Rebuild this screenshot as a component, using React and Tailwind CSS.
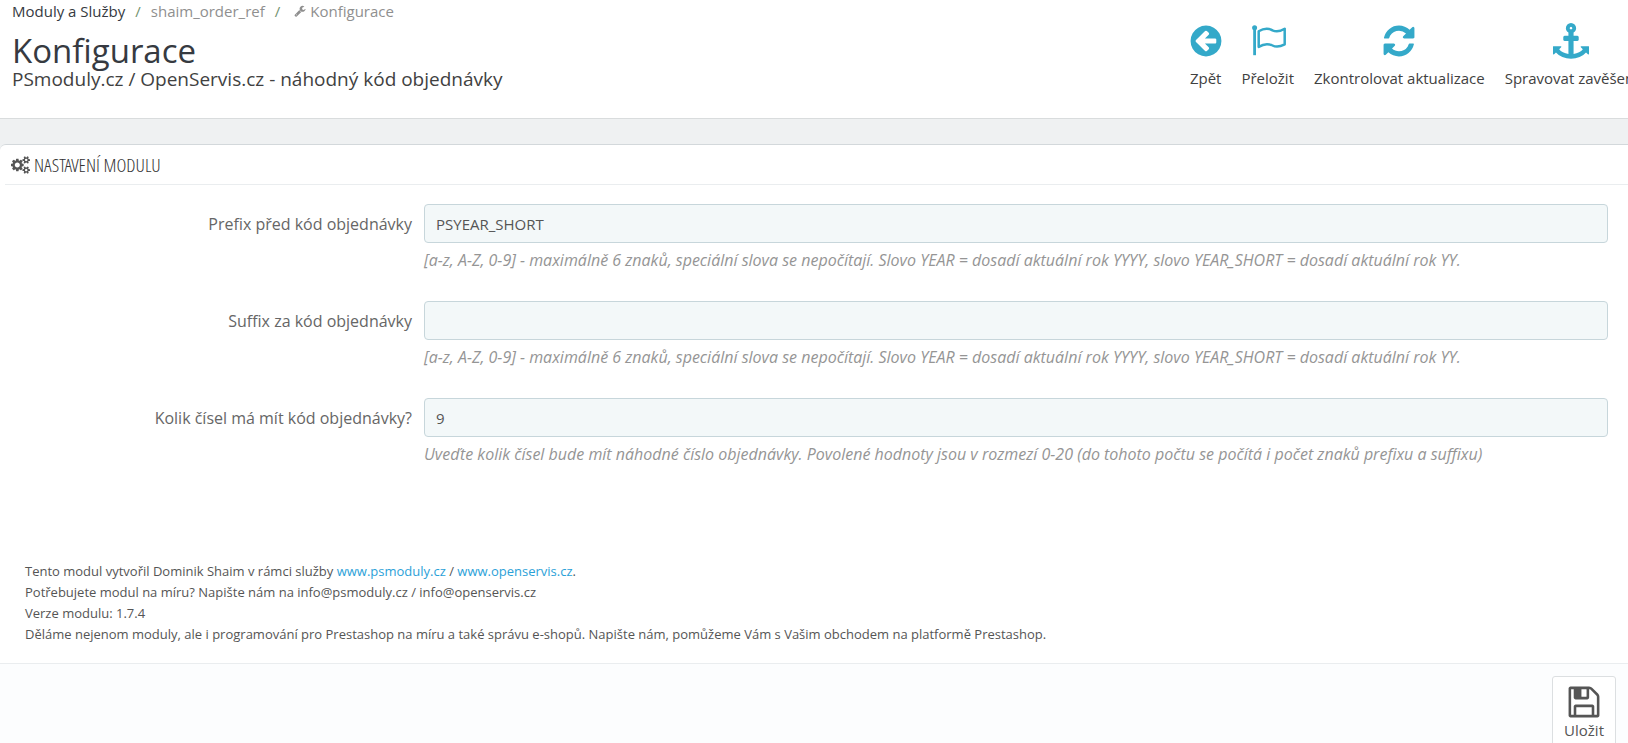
import React, { useState } from "react";

const paths = {
  back: "M1408 960v-128q0-26-19-45t-45-19h-502l189-189q19-19 19-45t-19-45l-91-91q-18-18-45-18t-45 18l-362 362-91 91q-18 18-18 45t18 45l91 91 362 362q18 18 45 18t45-18l91-91q18-18 18-45t-18-45l-189-189h502q26 0 45-19t19-45zm256-64q0 209-103 385.5t-279.5 279.5-385.5 103-385.5-103-279.5-279.5-103-385.5 103-385.5 279.5-279.5 385.5-103 385.5 103 279.5 279.5 103 385.5z",
  refresh: "M1639 1056q0 5-1 7-64 268-268 434.5t-478 166.5q-146 0-282.5-55t-243.5-157l-129 129q-19 19-45 19t-45-19-19-45v-448q0-26 19-45t45-19h448q26 0 45 19t19 45-19 45l-137 137q71 66 161 102t187 36q134 0 250-65t186-179q11-17 53-117 8-23 30-23h192q13 0 22.5 9.5t9.5 22.5zm25-800v448q0 26-19 45t-45 19h-448q-26 0-45-19t-19-45 19-45l138-138q-148-137-349-137-134 0-250 65t-186 179q-11 17-53 117-8 23-30 23h-199q-13 0-22.5-9.5t-9.5-22.5v-7q65-268 270-434.5t480-166.5q146 0 284 55.5t245 156.5l130-129q19-19 45-19t45 19 19 45z",
  anchor: "M960 256q0-26-19-45t-45-19-45 19-19 45 19 45 45 19 45-19 19-45zm832 928v352q0 22-20 30-8 2-12 2-12 0-23-9l-93-93q-119 143-318.5 226.5t-429.5 83.5-429.5-83.5-318.5-226.5l-93 93q-9 9-23 9-4 0-12-2-20-8-20-30v-352q0-14 9-23t23-9h352q22 0 30 20 8 19-7 35l-100 100q67 91 189.5 153.5t271.5 82.5v-647h-192q-26 0-45-19t-19-45v-128q0-26 19-45t45-19h192v-163q-58-34-93-92.5t-35-128.5q0-106 75-181t181-75 181 75 75 181q0 70-35 128.5t-93 92.5v163h192q26 0 45 19t19 45v128q0 26-19 45t-45 19h-192v647q149-20 271.5-82.5t189.5-153.5l-100-100q-15-16-7-35 8-20 30-20h352q14 0 23 9t9 23z",
  save: "M512 1536h768v-384h-768v384zm896 0h128v-896q0-14-10-38.5t-20-34.5l-281-281q-10-10-34-20t-39-10v416q0 40-28 68t-68 28h-576q-40 0-68-28t-28-68v-416h-128v1280h128v-416q0-40 28-68t68-28h832q40 0 68 28t28 68v416zm-384-928v-320q0-13-9.5-22.5t-22.5-9.5h-192q-13 0-22.5 9.5t-9.5 22.5v320q0 13 9.5 22.5t22.5 9.5h192q13 0 22.5-9.5t9.5-22.5zm640 32v928q0 40-28 68t-68 28h-1344q-40 0-68-28t-28-68v-1344q0-40 28-68t68-28h928q40 0 88 20t76 48l280 280q28 28 48 76t20 88z",
  wrench: "M448 1472q0-26-19-45t-45-19-45 19-19 45 19 45 45 19 45-19 19-45zm644-420l-682 682q-37 37-90 37-52 0-91-37l-106-108q-38-36-38-90 0-53 38-91l681-681q39 98 114.5 173.5t173.5 114.5zm634-435q0 39-23 106-47 134-164.5 217.5t-258.5 83.5q-185 0-316.5-131.5t-131.5-316.5 131.5-316.5 316.5-131.5q58 0 121.5 16.5t107.5 46.5q16 11 16 28t-16 28l-293 169v224l193 107q5-3 79-48.5t135.5-81 70.5-35.5q15 0 23.5 10t8.5 25z",
  cogs: "M896 896q0-106-75-181t-181-75-181 75-75 181 75 181 181 75 181-75 75-181zm768 512q0-52-38-90t-90-38-90 38-38 90q0 53 37.5 90.5t90.5 37.5 90.5-37.5 37.5-90.5zm0-1024q0-52-38-90t-90-38-90 38-38 90q0 53 37.5 90.5t90.5 37.5 90.5-37.5 37.5-90.5zm-384 421v185q0 10-7 19.5t-16 10.5l-155 24q-11 35-32 76 34 48 90 115 7 11 7 20 0 12-7 19-23 30-82.5 89.5t-78.5 59.5q-11 0-21-7l-115-90q-37 19-77 31-11 108-23 155-7 24-30 24h-186q-11 0-20-7.5t-10-17.5l-23-153q-34-10-75-31l-118 89q-7 7-20 7-11 0-21-8-144-133-144-160 0-9 7-19 10-14 41-53t47-61q-23-44-35-82l-152-24q-10-1-17-9.5t-7-19.5v-185q0-10 7-19.5t16-10.5l155-24q11-35 32-76-34-48-90-115-7-11-7-20 0-12 7-20 22-30 82-89t79-59q11 0 21 7l115 90q34-18 77-32 11-108 23-154 7-24 30-24h186q11 0 20 7.5t10 17.5l23 153q34 10 75 31l118-89q8-7 20-7 11 0 21 8 144 133 144 160 0 8-7 19-12 16-42 54t-45 60q23 48 34 82l152 23q10 2 17 10.5t7 19.5zm640 533v140q0 16-149 31-12 27-30 52 51 113 51 138 0 4-4 7-122 71-124 71-8 0-46-47t-52-68q-20 2-30 2t-30-2q-14 21-52 68t-46 47q-2 0-124-71-4-3-4-7 0-25 51-138-18-25-30-52-149-15-149-31v-140q0-16 149-31 13-29 30-52-51-113-51-138 0-4 4-7 4-2 35-20t59-34 30-16q8 0 46 46.5t52 67.5q20-2 30-2t30 2q51-71 92-112l6-2q4 0 124 70 4 3 4 7 0 25-51 138 17 23 30 52 149 15 149 31zm0-1024v140q0 16-149 31-12 27-30 52 51 113 51 138 0 4-4 7-122 71-124 71-8 0-46-47t-52-68q-20 2-30 2t-30-2q-14 21-52 68t-46 47q-2 0-124-71-4-3-4-7 0-25 51-138-18-25-30-52-149-15-149-31v-140q0-16 149-31 13-29 30-52-51-113-51-138 0-4 4-7 4-2 35-20t59-34 30-16q8 0 46 46.5t52 67.5q20-2 30-2t30 2q51-71 92-112l6-2q4 0 124 70 4 3 4 7 0 25-51 138 17 23 30 52 149 15 149 31z",
};

const Icon = ({ name, className, viewBox = "0 0 1792 1792" }) => (
  <svg viewBox={viewBox} className={className} fill="currentColor" aria-hidden="true">
    <path d={paths[name]} />
  </svg>
);

const FlagIcon = ({ className }) => (
  <svg viewBox="-1 0 36 36" className={className} fill="none" stroke="currentColor" aria-hidden="true">
    <circle cx="3.6" cy="4.8" r="2.5" fill="currentColor" stroke="none" />
    <path d="M3.6 5v27.2" strokeWidth="2.8" />
    <path d="M7.7 8.3C13 5 17 4.8 21.5 7.3c4 2 8 1 12.2-1.6v15.6c-4.7 2.6-8 3.4-12.2 1.2C17 20.3 13 20.5 7.7 23.9z" strokeWidth="2.5" strokeLinejoin="round" />
  </svg>
);

const tools = [
  { icon: "back", label: "Zpět" },
  { icon: "flag", label: "Přeložit" },
  { icon: "refresh", label: "Zkontrolovat aktualizace" },
  { icon: "anchor", label: "Spravovat zavěšení" },
];

const wordsHelp = "[a-z, A-Z, 0-9] - maximálně 6 znaků, speciální slova se nepočítají. Slovo YEAR = dosadí aktuální rok YYYY, slovo YEAR_SHORT = dosadí aktuální rok YY.";

const fields = [
  { id: "prefix", label: "Prefix před kód objednávky", help: wordsHelp },
  { id: "suffix", label: "Suffix za kód objednávky", help: wordsHelp },
  {
    id: "length",
    label: "Kolik čísel má mít kód objednávky?",
    help: "Uveďte kolik čísel bude mít náhodné číslo objednávky. Povolené hodnoty jsou v rozmezí 0-20 (do tohoto počtu se počítá i počet znaků prefixu a suffixu)",
  },
];

const Header = () => (
  <header className="flex h-[119px] justify-between border-b border-[#d9dcdd] bg-white pl-3">
    <div>
      <nav className="flex h-[22px] items-center text-[15px] text-[#363a41]">
        <a href="#moduly">Moduly a Služby</a>
        <span className="px-2.5 text-[#72926f]">/</span>
        <a href="#modul" className="text-[#8f8f8f]">shaim_order_ref</a>
        <span className="px-2.5 text-[#72926f]">/</span>
        <a href="#konfigurace" className="flex items-center gap-1 pl-1 text-[#8f8f8f]">
          <Icon name="wrench" className="h-3 w-3" />
          Konfigurace
        </a>
      </nav>
      <h1 className="mt-[13px] text-[33px] leading-8 text-[#363a41]">Konfigurace</h1>
      <h2 className="text-[19px] leading-6 text-[#414141]">PSmoduly.cz / OpenServis.cz - náhodný kód objednávky</h2>
    </div>
    <div className="-mr-2.5 flex shrink-0 items-start gap-5 pt-[23px] text-[15px] text-[#414141]">
      {tools.map((tool) => (
        <button key={tool.label} type="button" className="flex cursor-pointer flex-col items-center gap-2 whitespace-nowrap">
          {tool.icon === "flag" ? (
            <FlagIcon className="h-9 w-9 text-[#34a9c9]" />
          ) : (
            <Icon name={tool.icon} className="-mx-1 h-9 w-9 text-[#34a9c9]" />
          )}
          <span>{tool.label}</span>
        </button>
      ))}
    </div>
  </header>
);

export default function App() {
  const [values, setValues] = useState({ prefix: "PSYEAR_SHORT", suffix: "", length: "9" });

  return (
    <div className="h-screen overflow-hidden bg-[#eff1f2] font-['Open_Sans','Noto_Sans',sans-serif]">
      <Header />
      <form className="mt-[25px] rounded-tl-md border-t border-[#d3d8db] bg-white" onSubmit={(e) => e.preventDefault()}>
        <h3 className="ml-[5px] flex h-10 items-center gap-1 border-b border-[#eaedef] pl-[6px] font-['Ubuntu_Condensed','Open_Sans_Condensed_Light','Open_Sans_Condensed',sans-serif] text-[19px] leading-6 text-[#333]">
          <Icon name="cogs" viewBox="0 0 1920 1792" className="h-[18px] w-[19px] text-[#555]" />
          NASTAVENÍ MODULU
        </h3>

        <div className="flex flex-col gap-7 pt-[19px] pr-5 pl-2">
          {fields.map((field) => (
            <div key={field.id} className="flex items-start">
              <label htmlFor={field.id} className="w-[26%] shrink-0 pr-3 text-right text-[16px] leading-10 text-[#666]">
                {field.label}
              </label>
              <div className="flex-1">
                <input
                  id={field.id}
                  type="text"
                  value={values[field.id]}
                  onChange={(e) => setValues({ ...values, [field.id]: e.target.value })}
                  className="block h-[39px] w-full rounded-[4px] border border-[#c7d6db] bg-[#f3f8f9] px-[11px] text-[15px] text-[#555] outline-none"
                />
                <p className="pt-[5px] pb-px text-[16px] leading-6 text-[#959595] italic">{field.help}</p>
              </div>
            </div>
          ))}
        </div>

        <div className="mt-[94px] pl-[25px] text-[13px] leading-[21px] text-[#555]">
          <p>
            Tento modul vytvořil Dominik Shaim v rámci služby <a href="#psmoduly" className="text-[#2ba1d8]">www.psmoduly.cz</a> / <a href="#openservis" className="text-[#2ba1d8]">www.openservis.cz</a>.
          </p>
          <p>Potřebujete modul na míru? Napište nám na info@psmoduly.cz / info@openservis.cz</p>
          <p>Verze modulu: 1.7.4</p>
          <p>Děláme nejenom moduly, ale i programování pro Prestashop na míru a také správu e-shopů. Napište nám, pomůžeme Vám s Vašim obchodem na platformě Prestashop.</p>
        </div>

        <div className="mt-[18px] flex h-28 items-start justify-end border-t border-[#eaedef] bg-[#fcfdfe] pt-3 pr-3">
          <button type="submit" className="flex h-20 cursor-pointer flex-col items-center rounded-[3px] border border-[#dcdfe1] bg-white px-[11px] pt-[7px] text-[15px] text-[#555]">
            <Icon name="save" className="h-9 w-9" />
            <span className="leading-5">Uložit</span>
          </button>
        </div>
      </form>
    </div>
  );
}
